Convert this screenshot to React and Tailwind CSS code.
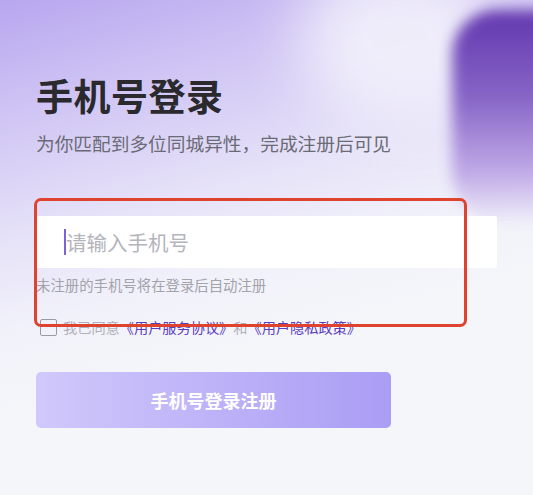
import React from 'react';

function App() {
  return (
    <div className="relative w-[533px] h-[495px] overflow-hidden bg-[#f5f6fa] font-['Noto_Sans_CJK_SC','Noto_Sans',sans-serif]">
      {/* background wash */}
      <div className="absolute inset-0 bg-[linear-gradient(165deg,#b8a6ef_0%,#cfc4f4_18%,#e6e2f8_38%,#f1f1fa_52%,#f5f6fa_66%)]" />
      <div className="absolute left-[300px] top-[-40px] w-[200px] h-[160px] rounded-full bg-[#f6f5fc] blur-[30px] opacity-80" />
      {/* purple blob top right */}
      <div className="absolute left-[452px] top-[10px] w-[140px] h-[215px] rounded-tl-[45px] rounded-bl-[55px] bg-[linear-gradient(180deg,#6236ae_0%,#8664c6_40%,#bfa9e6_75%,rgba(230,222,248,0)_100%)] blur-[7px]" />

      <div className="relative flex flex-col px-[36px] pt-[72px]">
        <h1 className="text-[37px] leading-[46px] font-bold text-[#2a2a2e] tracking-[0.5px]">手机号登录</h1>
        <p className="mt-[12px] text-[18.7px] leading-[26px] text-[#6b6b75]">为你匹配到多位同城异性，完成注册后可见</p>

        <div className="mt-[60px] w-[461px] h-[52px] bg-white rounded-[2px] flex items-center pl-[28px]">
          <span className="w-[2px] h-[26px] bg-[#7b62d6]" />
          <span className="text-[20.5px] text-[#b4b4bc]">请输入手机号</span>
        </div>
        <p className="mt-[7px] text-[14.4px] leading-[20px] text-[#a3a3ab]">未注册的手机号将在登录后自动注册</p>

        <div className="mt-[22px] flex items-center pl-[4px] text-[14.2px] leading-[20px]">
          <span className="w-[17px] h-[17px] border border-[#9a9aa2] rounded-[2px] mr-[6px]" />
          <span className="text-[#b0b0b8]">我已同意</span>
          <span className="text-[#5a3cc0]">《用户服务协议》</span>
          <span className="text-[#b0b0b8]">和</span>
          <span className="text-[#5a3cc0]">《用户隐私政策》</span>
        </div>

        <button className="mt-[35px] w-[355px] h-[56px] rounded-[5px] bg-[linear-gradient(90deg,#d1c8fb,#aa9df4)] text-white text-[18px] font-bold">
          手机号登录注册
        </button>
      </div>

      {/* annotation frame */}
      <div className="absolute left-[34px] top-[198px] w-[433px] h-[129px] border-[3px] border-[#e0432d] rounded-[7px]" />
    </div>
  );
}

export default App;
